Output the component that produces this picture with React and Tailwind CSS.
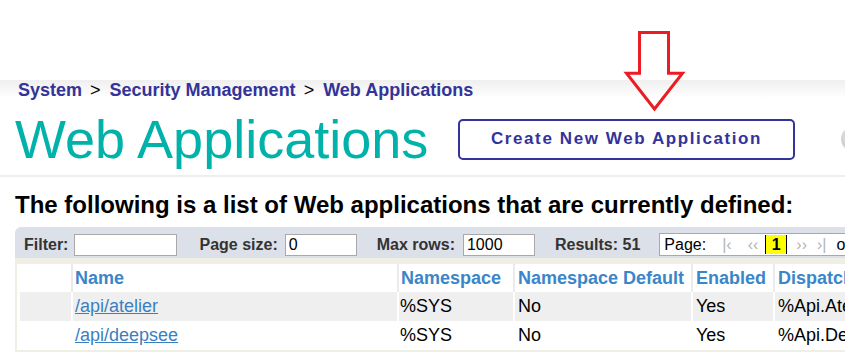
export default function App() {
  return (
    <div className="relative w-[845px] h-[352px] overflow-hidden bg-white font-['Liberation_Sans',Arial,sans-serif]">
      <div className="h-[80px]" />
      <div className="w-[1100px] bg-[linear-gradient(to_bottom,#efefef,#ffffff_18px)] border-b-2 border-[#eeeeee] pb-[9px]">
        <div className="pl-[18px] h-[21px] leading-[21px] text-[18px] font-bold text-[#333399] whitespace-nowrap flex">
          <span>System</span>
          <span className="ml-[8px] mr-[9px] font-normal text-black">&gt;</span>
          <span>Security Management</span>
          <span className="ml-[8px] mr-[9px] font-normal text-black">&gt;</span>
          <span>Web Applications</span>
        </div>
        <div className="mt-[11px] h-[54px] flex items-center">
          <h1 className="w-[458px] shrink-0 pl-[15px] text-[54px] leading-[54px] text-[#00b2a9] whitespace-nowrap font-normal">
            Web Applications
          </h1>
          <button className="w-[337px] shrink-0 h-[41px] border-2 border-[#333399] rounded-[5px] bg-white text-[17px] font-bold tracking-[1.6px] text-[#333399] whitespace-nowrap">
            Create New Web Application
          </button>
          <div className="ml-[46px] shrink-0 w-[24px] h-[24px] rounded-full bg-[radial-gradient(circle_at_30%_40%,#e0e0e0,#b8b8b8)]" />
        </div>
      </div>

      <div className="mt-[14px] pl-[15px] text-[24px] leading-[28px] font-bold text-black whitespace-nowrap">
        The following is a list of Web applications that are currently defined:
      </div>

      <div className="mt-[8px] ml-[15px] w-[1085px] h-[31px] pt-[4px] bg-[#dce0e8] rounded-tl-[6px] flex items-center pl-[9px] text-[16px] font-bold text-[#333333] whitespace-nowrap">
        <span>Filter:</span>
        <div className="ml-[6px] w-[103px] h-[22px] bg-white border border-[#a9a9a9]" />
        <span className="ml-[22px]">Page size:</span>
        <div className="ml-[7px] w-[72px] h-[22px] bg-white border border-[#a9a9a9] pl-[3px] font-normal text-black leading-[20px]">0</div>
        <span className="ml-[20px]">Max rows:</span>
        <div className="ml-[8px] w-[72px] h-[22px] bg-white border border-[#a9a9a9] pl-[3px] font-normal text-black leading-[20px]">1000</div>
        <span className="ml-[20px]">Results: 51</span>
        <div className="ml-[19px] h-[23px] w-[300px] bg-white border border-[#a9a9a9] flex items-center pl-[4px] font-normal text-black">
          <span>Page:</span>
          <span className="ml-[16px] text-[#b4b4b4]">|‹</span>
          <span className="ml-[16px] text-[#b4b4b4]">‹‹</span>
          <span className="ml-[7px] w-[22px] h-[19px] bg-[#ffff00] border-x border-black flex items-center justify-center font-bold">1</span>
          <span className="ml-[9px] text-[#b4b4b4]">››</span>
          <span className="ml-[10px] text-[#b4b4b4]">›|</span>
          <span className="ml-[10px]">of 1</span>
        </div>
      </div>

      <div className="ml-[15px] w-[1085px] bg-[#efefe6] pl-[2px] pt-[6px] pb-[6px]">
        <div className="bg-white px-[3px]">
          <div className="flex h-[28px] text-[18px] font-bold text-[#3a86c8] whitespace-nowrap">
            <div className="w-[51px]" />
            <div className="w-[326px] border-l-2 border-[#ebebeb] pl-[2px] flex items-center">Name</div>
            <div className="w-[116px] border-l-2 border-[#ebebeb] pl-[2px] flex items-center">Namespace</div>
            <div className="w-[178px] border-l-2 border-[#ebebeb] pl-[3px] flex items-center">Namespace Default</div>
            <div className="w-[82px] border-l-2 border-[#ebebeb] pl-[3px] flex items-center">Enabled</div>
            <div className="w-[300px] border-l-2 border-[#ebebeb] pl-[3px] flex items-center">Dispatch Class</div>
          </div>
          {[
            { name: "/api/atelier", disp: "%Api.Atelier", bg: "bg-[#efefef]" },
            { name: "/api/deepsee", disp: "%Api.DeepSee", bg: "bg-white" },
          ].map((r) => (
            <div key={r.name} className={`flex h-[29px] text-[18px] text-black whitespace-nowrap ${r.bg}`}>
              <div className="w-[51px]" />
              <div className="w-[326px] border-l-2 border-white pl-[2px] flex items-center">
                <a href="#" className="text-[#3b7fc2] underline">{r.name}</a>
              </div>
              <div className="w-[116px] border-l-2 border-white pl-[1px] flex items-center">%SYS</div>
              <div className="w-[178px] border-l-2 border-white pl-[3px] flex items-center">No</div>
              <div className="w-[82px] border-l-2 border-white pl-[3px] flex items-center">Yes</div>
              <div className="w-[300px] border-l-2 border-white pl-[3px] flex items-center">{r.disp}</div>
            </div>
          ))}
        </div>
      </div>

      <svg className="absolute left-[620px] top-[26px]" width="70" height="92" viewBox="0 0 70 92">
        <polygon
          points="19.5,6.5 48.5,6.5 48.5,47.3 62.5,47.3 34.5,83 6.5,47.3 19.5,47.3"
          fill="none"
          stroke="#ec1c24"
          strokeWidth="3"
          strokeLinejoin="miter"
        />
      </svg>
    </div>
  );
}
